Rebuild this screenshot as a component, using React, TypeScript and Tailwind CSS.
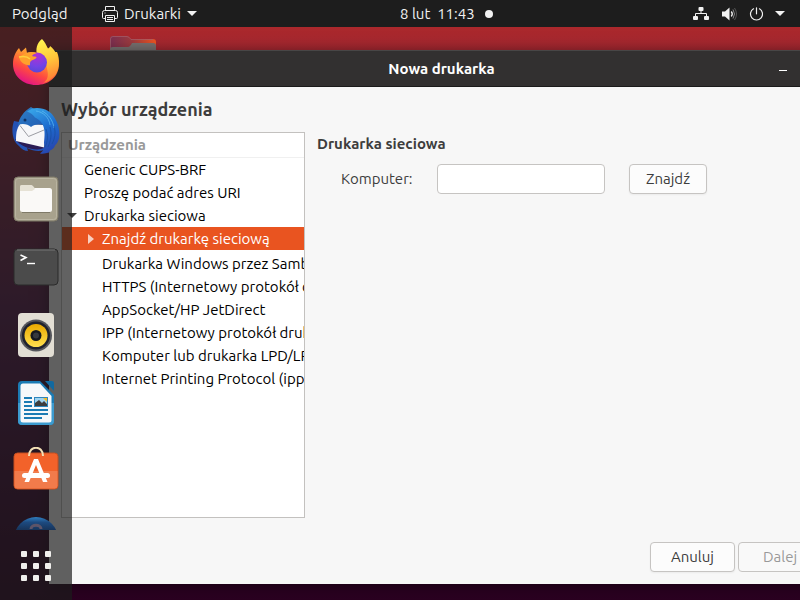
import React from "react";

const devices = [
  "Drukarka Windows przez Samba",
  "HTTPS (Internetowy protokół drukowania)",
  "AppSocket/HP JetDirect",
  "IPP (Internetowy protokół drukowania)",
  "Komputer lub drukarka LPD/LPR",
  "Internet Printing Protocol (ipp)",
];

function Caret({ className }: { className: string }) {
  return (
    <svg viewBox="0 0 10 5" className={"h-[5px] w-[10px] shrink-0 " + className} fill="currentColor" aria-hidden="true">
      <path d="M0 0h10L5 5z" />
    </svg>
  );
}

function TopBar() {
  return (
    <header className="relative z-20 flex h-[27px] shrink-0 items-center bg-[#1d1d1d] text-[15px] leading-5 text-[#f2f2f2]">
      <div className="flex w-1/2 items-center pl-3">
        <button className="w-[90px] text-left">Podgląd</button>
        <button className="flex items-center whitespace-nowrap">
          <svg viewBox="0 0 16 16" className="mr-1.5 h-4 w-4" fill="none" stroke="currentColor" aria-hidden="true">
            <path d="M3.5 4V.5h9V4M3.5 12.500H1.500q-1 0-1-1v-5q0-2 2-2h11q2 0 2 2v5q0 1-1 1h-2M3.500 9.500h9v6h-9zM5 11.500h6M5 13.500h6M2.500 7h1" />
          </svg>
          Drukarki
          <Caret className="ml-1.5" />
        </button>
      </div>
      <button className="flex items-center gap-2.5">
        <span className="whitespace-pre">8 lut  11:43</span>
        <span className="h-2 w-2 rounded-full bg-[#f2f2f2]" />
      </button>
      <button className="ml-auto flex items-center gap-3 pr-[15px]" aria-label="System">
        <svg viewBox="0 0 16 14" className="h-[14px] w-4" fill="currentColor" aria-hidden="true">
          <rect x="5.500" y="0" width="5" height="4" rx="1" />
          <rect x="0" y="9" width="5" height="4" rx="1" />
          <rect x="11" y="9" width="5" height="4" rx="1" />
          <path d="M8 4v3M2.500 9V6.500h11V9" fill="none" stroke="currentColor" />
        </svg>
        <svg viewBox="0 0 16 14" className="h-[14px] w-4" fill="currentColor" aria-hidden="true">
          <path d="M1 4.500h3L8.500.5v13L4 9.500H1z" />
          <path d="M10.300 4.500q2 2.500 0 5" fill="none" stroke="currentColor" strokeWidth="1.300" />
          <path d="M12 2.500q3 4.500 0 9" fill="none" stroke="#8a8a8a" />
          <path d="M13.500 1q4 6 0 12" fill="none" stroke="#555" />
        </svg>
        <svg viewBox="0 0 14 14" className="h-[14px] w-[14px]" fill="none" stroke="currentColor" strokeWidth="1.200" strokeLinecap="round" aria-hidden="true">
          <path d="M7.500 .8v6M4.500 1.800a6 6 0 1 0 6 0" />
        </svg>
        <Caret className="" />
      </button>
    </header>
  );
}

function FirefoxIcon() {
  return (
    <svg viewBox="0 0 48 48" className="h-12 w-12" aria-hidden="true">
      <defs>
        <linearGradient id="ffOuter" x1=".85" y1=".1" x2=".3" y2="1">
          <stop offset="0" stopColor="#ffc43a" />
          <stop offset=".35" stopColor="#ff9130" />
          <stop offset=".65" stopColor="#ff4b3f" />
          <stop offset="1" stopColor="#e0108a" />
        </linearGradient>
        <radialGradient id="ffGlobe" cx=".5" cy=".15" r=".9">
          <stop offset="0" stopColor="#b32fd0" />
          <stop offset=".6" stopColor="#7542e5" />
          <stop offset="1" stopColor="#5547d6" />
        </radialGradient>
        <linearGradient id="ffTail" x1=".3" y1="0" x2=".5" y2="1">
          <stop offset="0" stopColor="#fff44f" />
          <stop offset=".5" stopColor="#ffc63a" />
          <stop offset="1" stopColor="#ff7a35" />
        </linearGradient>
      </defs>
      <path d="M7 9l2 4 5-4.500 1 5.500c4-1 7-1 10 0l20-1c1.500 3.500 2.300 8 2 12 0 12.500-10 21-23 21S1 37 1 25C1 18 3.500 13 7 9z" fill="url(#ffOuter)" />
      <path d="M30 0c3 3 4 6 6 9.500 1-1 2-1 2-2.500 5 4 8.500 10 8.500 17.500 0 9-6 17-15 19.500 4-3 5-7 4-12-1-8-4-12-10-14.500C23 10 25 4 30 0z" fill="url(#ffTail)" />
      <circle cx="25" cy="23.500" r="10" fill="url(#ffGlobe)" />
      <path d="M14 14c4-1.500 8-1 11 0-3 1-4 1.500-5 3 2 1 4.500 0 4.500 1.500-1 2-5 2.500-6 4-1 2 0 3-1 4-6-1-9.500-3.500-10.500-8.500z" fill="#ffa12c" />
      <path d="M7 18c5-1 9 0 11 2" fill="none" stroke="#ffd13d" strokeWidth="1.500" />
    </svg>
  );
}

function ThunderbirdIcon() {
  return (
    <svg viewBox="0 0 48 48" className="h-12 w-12" aria-hidden="true">
      <defs>
        <linearGradient id="tbHead" x1="0" y1="0" x2="1" y2="1">
          <stop offset="0" stopColor="#2f7fc6" />
          <stop offset="1" stopColor="#1f5cb4" />
        </linearGradient>
        <linearGradient id="tbWing" x1=".3" y1="0" x2=".7" y2="1">
          <stop offset="0" stopColor="#35a0e6" />
          <stop offset=".45" stopColor="#1e6fd0" />
          <stop offset="1" stopColor="#2744ae" />
        </linearGradient>
      </defs>
      <path d="M2 14C-1 22 0 34 7 39c2 3 6 5 9 5l-1-3c6 3 12 4 17 2L34 20z" fill="#2452b4" />
      <path d="M3 32l30 8c-5 5-23 2-30-8z" fill="#2b1c55" />
      <path d="M8.700 16l24.500 2-1 22.500L4 34C4 28 4 22 8.700 16z" fill="#f7f7f9" />
      <path d="M8 18.500l8.500 11L32 23" fill="none" stroke="#9b9ca3" />
      <path d="M6 18C7 11 12 4 19 0l3 2h6l6 17c-5-2-11-2-15 1-3-3-9-4-13-2z" fill="url(#tbHead)" />
      <path d="M20 1.500c10-2 19 2 23 10 4 6 5 14 4 20-1 3-2 5-4 7-1 3-3 4-5 5l-1 2c-3 1-6 1.500-9 1 4-3 5-6 4-11 1-5 1-9 0-14-1-6-5-9-9-11-2-3-5-5-8-6z" fill="url(#tbWing)" />
      <path d="M24 4c7 1 13 6 14 14M30 4c6 3 11 9 12 17" fill="none" stroke="#62c0f2" strokeWidth=".7" />
      <path d="M34 22c2 6 2 12-1 18M38 20c2 7 1 13-2 20M42 19c2 7 1 12-2 18" fill="none" stroke="#184e9f" strokeWidth=".8" />
      <circle cx="13" cy="13" r="1.500" fill="#123363" />
    </svg>
  );
}

function FilesIcon() {
  return (
    <svg viewBox="0 0 48 48" className="h-12 w-12" aria-hidden="true">
      <rect x="2" y="2" width="44" height="44" rx="4" fill="#a8a28d" stroke="#7f7a68" />
      <rect x="3.500" y="3.500" width="41" height="41" rx="3" fill="none" stroke="#b9b4a1" />
      <path d="M8 12q0-2 2-2h9l3 3h4v5H8z" fill="#e0dccd" />
      <rect x="8" y="13" width="32" height="24" rx="2.500" fill="#faf9f7" />
      <path d="M8 12q0-2 2-2h9q2 0 4 4l-3 2H8z" fill="#e6e2d5" />
      <path d="M10 37.500h28" stroke="#7f7a68" />
    </svg>
  );
}

function TerminalIcon() {
  return (
    <svg viewBox="0 0 48 48" className="h-12 w-12" aria-hidden="true">
      <rect x="2" y="6" width="44" height="36" rx="4" fill="#4b4b4b" stroke="#2b2b2b" />
      <path d="M5 7h38" stroke="#777" />
      <path d="M8.500 12l5.500 2.500L8.500 17.500" fill="none" stroke="#fff" strokeWidth="1.600" />
      <path d="M15 20.500h8" stroke="#fff" strokeWidth="1.400" />
    </svg>
  );
}

function RhythmboxIcon() {
  return (
    <svg viewBox="0 0 48 48" className="h-12 w-12" aria-hidden="true">
      <defs>
        <linearGradient id="rb" x1="0" y1="0" x2="0" y2="1">
          <stop offset="0" stopColor="#e9a800" />
          <stop offset="1" stopColor="#ffe04f" />
        </linearGradient>
      </defs>
      <rect x="6" y="2" width="36" height="44" rx="4" fill="#e2ded4" />
      <circle cx="24" cy="24.500" r="16" fill="#55565c" />
      <circle cx="24" cy="24.500" r="14" fill="#20222e" />
      <circle cx="24" cy="24.500" r="11.500" fill="url(#rb)" />
      <circle cx="24" cy="24.500" r="5.500" fill="#17191f" />
      <circle cx="24" cy="24.500" r="3" fill="#37393e" />
    </svg>
  );
}

function WriterIcon() {
  return (
    <svg viewBox="0 0 48 48" className="h-12 w-12" aria-hidden="true">
      <path d="M10 2h18l14 14v26q0 4-4 4H10q-4 0-4-4V6q0-4 4-4z" fill="#1b7bb4" />
      <path d="M6 24h36v18q0 4-4 4H10q-4 0-4-4z" fill="#3c9bcf" />
      <path d="M33 2h7q2 0 2 2v8z" fill="#1269a0" />
      <path d="M11 4.500h17L39.500 17v24q0 2.500-2.500 2.500H11q-2.500 0-2.500-2.500V7q0-2.500 2.500-2.500z" fill="#f6f8fa" />
      <path d="M12 19h8M12 23h8M12 27h8M12 31h24M12 35h24M12 39h18" stroke="#1b7bb4" strokeWidth="2" />
      <rect x="22" y="18" width="14" height="10" fill="#2e86bd" />
      <rect x="23" y="19" width="12" height="8" fill="#9fd4f0" />
      <path d="M23 27v-3l4-3 3 3 2-2 3 3v2z" fill="#3d3d3d" />
      <path d="M31 19h4v4z" fill="#f5bd29" />
    </svg>
  );
}

function SoftwareIcon() {
  return (
    <svg viewBox="0 0 48 48" className="h-12 w-12" aria-hidden="true">
      <rect x="2" y="6" width="44" height="36" rx="3.500" fill="#f2622a" stroke="#c44f20" />
      <path d="M2.500 24h43v14.500q0 3-3 3h-37q-3 0-3-3z" fill="#f17b4b" />
      <path d="M17 9c0-11 14-11 14 0" fill="none" stroke="#f3e0b5" strokeWidth="2" />
      <path d="M22 12h4l9.500 23H31L24 18l-7 17h-4.500z" fill="#fff" />
      <rect x="10" y="26" width="28" height="5" rx="2.500" fill="#fff" />
    </svg>
  );
}

function HelpIcon() {
  return (
    <svg viewBox="0 0 48 48" className="h-12 w-12" aria-hidden="true">
      <defs>
        <linearGradient id="help" x1="0" y1="0" x2="0" y2=".3">
          <stop offset="0" stopColor="#2f7fc0" />
          <stop offset=".4" stopColor="#1d4a80" />
          <stop offset="1" stopColor="#173358" />
        </linearGradient>
      </defs>
      <circle cx="24" cy="24" r="22" fill="url(#help)" />
      <path d="M19 14c0-5 10-5 10 0" fill="none" stroke="#5d5468" strokeWidth="3" />
    </svg>
  );
}

const launchers = [
  { name: "Firefox", Icon: FirefoxIcon },
  { name: "Thunderbird", Icon: ThunderbirdIcon },
  { name: "Pliki", Icon: FilesIcon },
  { name: "Terminal", Icon: TerminalIcon },
  { name: "Rhythmbox", Icon: RhythmboxIcon },
  { name: "LibreOffice Writer", Icon: WriterIcon },
  { name: "Ubuntu Software", Icon: SoftwareIcon },
  { name: "Pomoc", Icon: HelpIcon },
];

function Dock() {
  return (
    <nav className="absolute inset-y-0 left-0 z-10 flex w-[72px] flex-col bg-[#1c1c1c]/69">
      <ul className="flex min-h-0 flex-1 flex-col overflow-hidden pt-0.5">
        {launchers.map(({ name, Icon }) => (
          <li key={name} className="flex h-[68px] shrink-0 items-center justify-center">
            <button aria-label={name}>
              <Icon />
            </button>
          </li>
        ))}
      </ul>
      <button className="flex h-[70px] shrink-0 items-center justify-center pt-0.5" aria-label="Programy">
        <span className="grid grid-cols-3 gap-1.5">
          {Array.from({ length: 9 }, (_, i) => (
            <span key={i} className="h-1.5 w-1.5 rounded-[1px] bg-[#f0efed]" />
          ))}
        </span>
      </button>
    </nav>
  );
}

function DeviceTree() {
  return (
    <section className="w-[244px] shrink-0 overflow-hidden border border-[#c3c1bf] bg-white whitespace-nowrap text-black">
      <h2 className="h-[25px] border-b border-[#f0f0f0] pl-1.5 leading-6 font-bold text-[#999]">Urządzenia</h2>
      <ul className="leading-[23px]">
        <li className="pl-[22px]">Generic CUPS-BRF</li>
        <li className="pl-[22px]">Proszę podać adres URI</li>
        <li>
          <div className="flex items-center gap-[7px] pl-[5px]">
            <Caret className="text-[#3d3d3d]" />
            Drukarka sieciowa
          </div>
          <ul>
            <li className="mb-0.5 flex items-center gap-2 bg-[#e95420] pl-[26px] text-white">
              <svg viewBox="0 0 6 10" className="h-2.5 w-1.5" fill="#f8cfc0" aria-hidden="true">
                <path d="M0 0v10l6-5z" />
              </svg>
              Znajdź drukarkę sieciową
            </li>
            {devices.map((device) => (
              <li key={device} className="pl-10">
                {device}
              </li>
            ))}
          </ul>
        </li>
      </ul>
    </section>
  );
}

const buttonStyle = "h-[30px] rounded border border-[#c6c4c2] bg-[#fcfcfc] shadow-xs";

function PrinterWindow() {
  return (
    <main className="absolute top-[23px] -right-[34px] bottom-4 left-[49px] flex flex-col bg-[#f7f7f7] text-[15px] leading-5 text-[#3d3d3d] shadow-[0_2px_14px_rgba(0,0,0,0.5)]">
      <div className="relative flex h-[37px] shrink-0 items-center justify-center border-t border-b border-t-[#484646] border-b-[#1b1b1b] bg-[#323030] text-white">
        <h1 className="font-bold">Nowa drukarka</h1>
        <button className="absolute inset-y-0 right-[47px] flex items-center pt-1" aria-label="Minimalizuj">
          <span className="h-px w-2 bg-white" />
        </button>
      </div>
      <div className="flex min-h-0 flex-1 flex-col px-3 pt-2 pb-3">
        <h2 className="mb-[9px] text-lg font-bold">Wybór urządzenia</h2>
        <div className="flex min-h-0 flex-1 gap-3">
          <DeviceTree />
          <section className="flex-1">
            <h3 className="mb-2 leading-6 font-bold">Drukarka sieciowa</h3>
            <form className="flex items-center gap-6 pl-6" onSubmit={(e) => e.preventDefault()}>
              <label htmlFor="host" className="w-[72px]">Komputer:</label>
              <input id="host" type="text" className="h-[30px] w-[168px] rounded border border-[#c6c4c2] bg-white px-2" />
              <button type="submit" className={buttonStyle + " w-[78px]"}>Znajdź</button>
            </form>
          </section>
        </div>
        <footer className="mt-6 flex justify-end gap-[3px]">
          <button className={buttonStyle + " w-[85px]"}>Anuluj</button>
          <button disabled className="h-[30px] w-[84px] rounded border border-[#c6c4c2] bg-[#f9f9f9] text-[#999]">Dalej</button>
        </footer>
      </div>
    </main>
  );
}

export default function App() {
  return (
    <div className="flex h-screen flex-col overflow-hidden bg-[#2a0020] font-['Ubuntu','Noto_Sans',sans-serif]">
      <TopBar />
      <div className="relative min-h-0 flex-1 overflow-hidden bg-linear-to-b from-[#ab282c] via-[#541848] to-[#2a0020]">
        <svg viewBox="0 0 48 40" className="absolute top-2 left-[109px] h-10 w-12" aria-hidden="true">
          <defs>
            <linearGradient id="folder" x1="0" y1="0" x2="1" y2="0">
              <stop offset="0" stopColor="#7b2f50" />
              <stop offset=".5" stopColor="#a03c3e" />
              <stop offset="1" stopColor="#f05420" />
            </linearGradient>
          </defs>
          <path d="M1 40V4q0-3 3-3h14q2 0 4 3h22q3 0 3 3v33z" fill="url(#folder)" />
          <path d="M1.500 14V4q0-2.500 2.500-2.500h14q2 0 4 3h22" fill="none" stroke="#a8606c" strokeWidth=".7" />
          <path d="M1 40V14q0-2 3-2h15q2 0 4-4h21q3 0 3 3v29z" fill="#77706f" />
        </svg>
        <PrinterWindow />
        <Dock />
      </div>
    </div>
  );
}
